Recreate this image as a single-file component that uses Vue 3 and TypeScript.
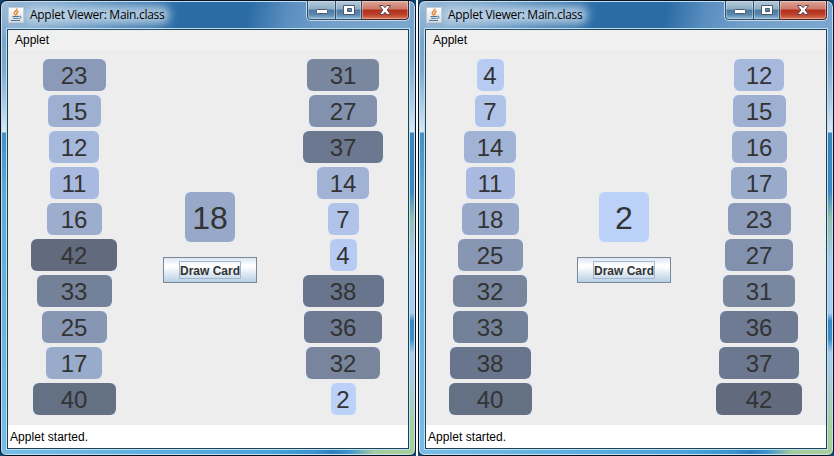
<script setup lang="ts">
interface AppletWindow {
  id: string
  left: number[]
  right: number[]
  drawn: number
}

const windows: AppletWindow[] = [
  {
    id: 'first',
    left: [23, 15, 12, 11, 16, 42, 33, 25, 17, 40],
    right: [31, 27, 37, 14, 7, 4, 38, 36, 32, 2],
    drawn: 18,
  },
  {
    id: 'second',
    left: [4, 7, 14, 11, 18, 25, 32, 33, 38, 40],
    right: [12, 15, 16, 17, 23, 27, 31, 36, 37, 42],
    drawn: 2,
  },
]

const widths: Record<number, number> = {
  2: 25, 4: 27, 7: 31, 11: 49, 12: 50, 14: 52, 15: 53, 16: 55, 17: 56, 18: 57, 23: 63,
  25: 65, 27: 68, 31: 72, 32: 74, 33: 75, 36: 78, 37: 80, 38: 81, 40: 83, 42: 86,
}

const colors: Record<number, string> = {
  2: '#bbd1f8', 4: '#b7cbf2', 7: '#b0c4ea', 11: '#a8badf', 12: '#a6b8dc', 14: '#a1b3d5',
  15: '#9eb0d2', 16: '#9cadce', 17: '#99abcb', 18: '#97a8c8', 23: '#8b9ab8', 25: '#8797b3',
  27: '#8292ae', 31: '#7a889f', 32: '#78859d', 33: '#738299', 36: '#6e7b92', 37: '#6c788f',
  38: '#69758c', 40: '#647083', 42: '#616b7d',
}
</script>

<template>
  <main class="desktop">
    <section v-for="w in windows" :key="w.id" class="window" :class="w.id">
      <header class="titlebar">
        <svg class="java" viewBox="0 0 16 16">
          <defs>
            <linearGradient :id="'icon-' + w.id" x1="0" y1="0" x2="0" y2="1">
              <stop offset="0" stop-color="#fff" />
              <stop offset="1" stop-color="#d9dcdf" />
            </linearGradient>
          </defs>
          <rect x=".5" y=".5" width="15" height="15" :fill="`url(#icon-${w.id})`" stroke="#c5ccd3" />
          <path d="M8.8 1.5C9.6 4 5.2 4.500 6.300 6.500C6.700 7.300 7.400 7.700 7.600 8.700M10.500 4C7.500 5.200 9.700 6.500 8.600 8.100" fill="none" stroke="#e8862e" stroke-width="1.500" />
          <path d="M4.500 9.500H11M5 11.300H10.500M3 13.500H12M11.200 9.300C14 8.800 13.600 11.300 11 11.800" fill="none" stroke="#4d7899" stroke-width="1" />
        </svg>
        <h1 class="title">Applet Viewer: Main.class</h1>
        <div class="controls">
          <button class="control minimize" aria-label="Minimize">
            <svg viewBox="0 0 14 12"><rect x="1.500" y="5.500" width="11" height="4" rx=".8" fill="#fff" stroke="#4e5b6c" /></svg>
          </button>
          <button class="control maximize" aria-label="Maximize">
            <svg viewBox="0 0 14 12">
              <path d="M1.500 1.500H12.500V10.500H1.500ZM5.500 4.500V7.500H9.500V4.500Z" fill="#fff" fill-rule="evenodd" stroke="#4e5b6c" />
            </svg>
          </button>
          <button class="control close" aria-label="Close">
            <svg viewBox="0 0 14 12">
              <path d="M1.500 1.500H5L7 3.700L9 1.500H12.500L9.200 6L12.500 10.500H9L7 8.300L5 10.500H1.500L4.800 6Z" fill="#fff" stroke="#5b4650" />
            </svg>
          </button>
        </div>
      </header>

      <div class="client">
        <nav class="menubar">Applet</nav>
        <div class="board">
          <div class="rack">
            <div v-for="n in w.left" :key="n" class="slot" :style="{ width: widths[n] + 'px' }">
              <div class="card" :style="{ background: colors[n] }">{{ n }}</div>
            </div>
          </div>
          <div class="middle">
            <div class="slot drawn">
              <div class="card" :style="{ background: colors[w.drawn] }">{{ w.drawn }}</div>
            </div>
            <button class="draw"><span>Draw Card</span></button>
          </div>
          <div class="rack">
            <div v-for="n in w.right" :key="n" class="slot" :style="{ width: widths[n] + 'px' }">
              <div class="card" :style="{ background: colors[n] }">{{ n }}</div>
            </div>
          </div>
        </div>
        <footer class="status">Applet started.</footer>
      </div>
    </section>
  </main>
</template>

<style>
body {
  margin: 0;
  overflow: hidden;
  background: #fff;
}
</style>

<style scoped>
.desktop {
  display: flex;
  gap: 2px;
  width: 834px;
  height: 456px;
  background: linear-gradient(90deg, #0d4576 416px, #fff 416px, #fff 418px, #0d4576 418px);
  font-family: "Liberation Sans", Arial, sans-serif;
  font-size: 12px;
  color: #000;
}

.window {
  box-sizing: border-box;
  flex: none;
  width: 416px;
  height: 456px;
  padding: 0 6px 6px;
  border: 1px solid #06121f;
  border-radius: 7px 7px 6px 6px;
  box-shadow: inset 0 0 0 1px #c4dff0;
  background:
    linear-gradient(90deg, #78bde7 0, #4aa3da 65%, #3c93cd 76%, #2f80bc 80%, #3c93cd 84%, #a5cc9e 90%, #a9cf98) 0 100% / 100% 7px no-repeat,
    linear-gradient(#76a3ce 0, #7aa5cd 55px, #b3cee5 105px, #dce9f4 131px, #3a86bd 132px, #3b87c1 190px, #93bfae 217px, #a9cdec 260px, #a9cdf0 312px, #3688c3 320px, #3d8fca 338px, #a9cdec 352px, #a9cbe0 375px, #a9cf98 430px) 100% 0 / 7px 100% no-repeat,
    linear-gradient(#9fbfda 0, #78a5cd 40px, #7fabd0 70px, #b9d2e7 110px, #dce9f4 131px, #4391c2 132px, #5daad6 190px, #69b2dc 300px, #78bde7) 0 0 / 7px 100% no-repeat,
    linear-gradient(100deg, #9bbad6 0, #78a4ca 60px, #4c85b7 120px, #2b6ca5 180px, #2b6ca5 245px, #5b8fc0 285px, #739fcb 325px, #7ba6cd 400px) 0 0 / 100% 28px no-repeat;
  background-color: #78a5cd;
}

.titlebar {
  display: flex;
  align-items: flex-start;
  height: 28px;
}

.java {
  flex: none;
  width: 16px;
  height: 16px;
  margin: 6px 0 0 1px;
  position: relative;
  z-index: 1;
}

.title {
  position: relative;
  z-index: 0;
  margin: 5px 0 0 6px;
  height: 18px;
  font: 12px/18px "Open Sans", "Noto Sans", sans-serif;
  letter-spacing: -0.28px;
  white-space: nowrap;
}

.title::before {
  content: "";
  position: absolute;
  z-index: -1;
  inset: 0 -6px;
  border-radius: 9px;
  background: #c6d9ea;
  opacity: 0.8;
  filter: blur(4px);
}

.controls {
  display: flex;
  box-sizing: border-box;
  width: 104px;
  height: 20px;
  margin-left: auto;
  margin-right: -1px;
  border: 1px solid #c5dbea;
  border-top: 0;
  border-radius: 0 0 5px 5px;
  overflow: hidden;
}

.control {
  display: flex;
  justify-content: center;
  align-items: center;
  box-sizing: border-box;
  height: 19px;
  padding: 0;
  border: 1px solid #2f4d68;
  border-top: 0;
  border-left: 0;
  box-shadow: inset 0 0 0 1px #ffffff55;
  background: linear-gradient(#b4cadb, #8fadc5 45%, #4e7aa0 50%, #5987af 75%, #8fbbd9);
}

.control svg {
  flex: none;
  width: 14px;
  height: 12px;
}

.minimize {
  width: 29px;
  border-left: 1px solid #2f4d68;
  border-bottom-left-radius: 4px;
}

.maximize {
  width: 26px;
}

.close {
  width: 47px;
  border-color: #4a2229;
  border-bottom-right-radius: 4px;
  background: linear-gradient(#dda697, #cc7868 45%, #b22f1b 50%, #bc402a 75%, #d87959);
}

.client {
  width: 400px;
  height: 418px;
  border: 1px solid #1d4259;
  box-shadow: 0 0 0 1px #bfe0ef;
  background: #ededed;
}

.menubar {
  height: 20px;
  padding-left: 7px;
  background: #f0f0f0;
  line-height: 20px;
}

.board {
  display: grid;
  grid-template-columns: 132px 140px 126px;
  height: 375px;
}

.second .board {
  grid-template-columns: 128px 140px 130px;
}

.rack {
  display: flex;
  flex-direction: column;
  align-items: center;
  gap: 4px;
  padding-top: 9px;
}

.slot {
  height: 32px;
  border-radius: 2px;
  background: #dfe8f8;
}

.card {
  height: 100%;
  border-radius: 6px;
  color: #333;
  font-size: 24px;
  line-height: 34px;
  text-align: center;
}

.middle {
  display: flex;
  flex-direction: column;
  align-items: center;
  gap: 15px;
  padding-top: 142px;
}

.drawn {
  width: 50px;
  height: 50px;
}

.drawn .card {
  font-size: 32px;
  line-height: 52px;
}

.draw {
  display: flex;
  justify-content: center;
  align-items: center;
  box-sizing: border-box;
  width: 94px;
  height: 26px;
  padding: 0;
  border: 1px solid #7a8a99;
  background: linear-gradient(#dde8f3 0, #fff 32%, #fff 36%, #b8cfe5);
  color: #333;
  font: bold 12px/18px "Liberation Sans", Arial, sans-serif;
}

.draw span {
  box-sizing: border-box;
  width: 62px;
  height: 18px;
  border: 1px solid #a3b8cc;
  display: flex;
  justify-content: center;
  white-space: nowrap;
}

.status {
  height: 23px;
  padding-left: 2px;
  background: #fff;
  line-height: 25px;
  letter-spacing: 0.05px;
}
</style>
